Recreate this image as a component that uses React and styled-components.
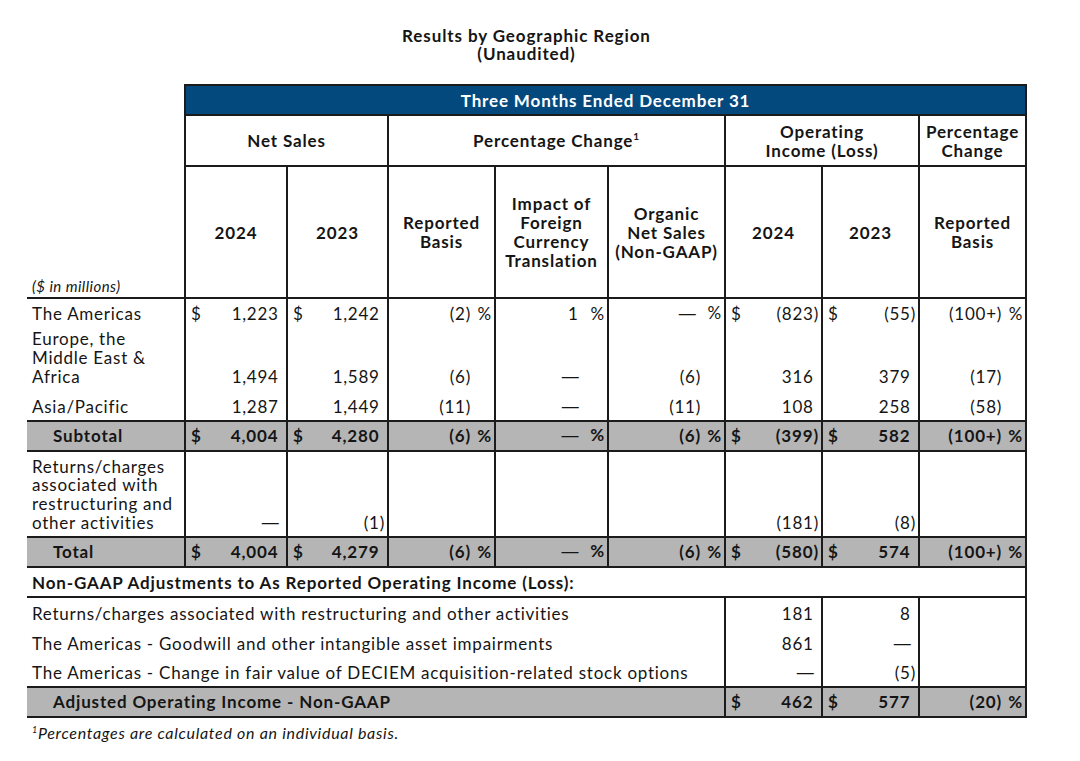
import React from 'react';
import styled, { createGlobalStyle, css } from 'styled-components';

const LINE = '#1b1b1b';
const BLUE = '#03497e';
const GRAY = '#b5b5b5';
const rule = `2px solid ${LINE}`;

const GlobalStyle = createGlobalStyle`
  html, body { margin: 0; padding: 0; background: #ffffff; }
  body {
    font-family: Lato, "Open Sans", "Liberation Sans", sans-serif;
    color: #151515;
  }
`;

const Page = styled.div`
  padding: 27px 0 0 27px;
  width: 999px;
`;

const Title = styled.h1`
  margin: 0 0 21px;
  font-size: 17px;
  line-height: 18px;
  font-weight: 700;
  letter-spacing: 0.9px;
  text-align: center;
`;

const Table = styled.table`
  width: 999px;
  table-layout: fixed;
  border-collapse: collapse;
  font-size: 17px;
  letter-spacing: 0.75px;
`;

const Col = styled.col`
  width: ${p => p.$w}px;
`;

const TR = styled.tr`
  height: ${p => p.$h}px;
  ${p => p.$total && css`
    background: ${GRAY};
    font-weight: 700;
    letter-spacing: 0.85px;
    & > td { border-top: ${rule}; border-bottom: ${rule}; vertical-align: middle; padding-bottom: 0; }
  `}
`;

const Blank = styled.th`
  padding: 0;
  border: none;
  text-align: left;
  vertical-align: bottom;
  ${p => p.$rule && css`border-bottom: ${rule};`}
`;

const UnitNote = styled.span`
  display: block;
  padding: 0 0 3px 5px;
  font-style: italic;
  font-weight: 400;
  font-size: 15px;
  line-height: 16px;
  letter-spacing: 0.45px;
`;

const Banner = styled.th`
  background: ${BLUE};
  color: #ffffff;
  border: ${rule};
  padding: 0;
  font-size: 17px;
  font-weight: 700;
  letter-spacing: 0.85px;
  text-align: center;
  vertical-align: middle;
`;

const HeadCell = styled.th`
  border: ${rule};
  padding: 0 2px;
  font-size: 17px;
  font-weight: 700;
  letter-spacing: 0.85px;
  line-height: 19px;
  text-align: center;
  vertical-align: middle;
`;

const Sup = styled.sup`
  font-size: 10px;
  line-height: 0;
  vertical-align: 7px;
`;

const Label = styled.td`
  padding: 0 4px 3.5px ${p => (p.$indent ? 26 : 5)}px;
  line-height: 18.7px;
  text-align: left;
  vertical-align: bottom;
`;

const SectionHead = styled.td`
  padding: 0 4px 0 5px;
  border-right: ${rule};
  border-bottom: ${rule};
  font-weight: 700;
  letter-spacing: 0.85px;
  text-align: left;
  vertical-align: middle;
`;

const Cell = styled.td`
  border-left: ${rule};
  border-right: ${rule};
  padding: 0 2px 3.5px 5px;
  line-height: 18.7px;
  vertical-align: bottom;
`;

const Inner = styled.div`
  display: flex;
  align-items: baseline;
  white-space: nowrap;
`;

const Dollar = styled.span`
  flex: none;
`;

const Figure = styled.span`
  flex: 1;
  text-align: right;
`;

const Dash = styled.span`
  font-family: "Liberation Sans", Arial, sans-serif;
  font-weight: 400;
  letter-spacing: 0;
`;

const Hang = styled.span`
  visibility: hidden;
`;

const Suffix = styled.span`
  flex: none;
  width: 21px;
  text-align: right;
`;

const Footnote = styled.p`
  margin: 6px 0 0 5px;
  font-size: 16px;
  font-style: italic;
  letter-spacing: 0.7px;
  line-height: 18px;
`;

const FootSup = styled.sup`
  font-size: 9px;
  line-height: 0;
  vertical-align: 6px;
`;

const WIDTHS = [158, 102, 101, 107, 113, 117, 97, 97, 107];

const a = (v, dollar = false) => ({ kind: 'amt', v, dollar });
const p = (v, pct = false) => ({ kind: 'pct', v, pct });
const e = () => ({ kind: 'empty' });

const ROWS = [
  {
    label: ['The Americas'], h: 29,
    cells: [a('1,223', true), a('1,242', true), p('(2)', true), p('1', true), p('—', true), a('(823)', true), a('(55)', true), p('(100+)', true)],
  },
  {
    label: ['Europe, the', 'Middle East &', 'Africa'], h: 63,
    cells: [a('1,494'), a('1,589'), p('(6)'), p('—'), p('(6)'), a('316'), a('379'), p('(17)')],
  },
  {
    label: ['Asia/Pacific'], h: 31,
    cells: [a('1,287'), a('1,449'), p('(11)'), p('—'), p('(11)'), a('108'), a('258'), p('(58)')],
  },
  {
    label: ['Subtotal'], h: 30, total: true,
    cells: [a('4,004', true), a('4,280', true), p('(6)', true), p('—', true), p('(6)', true), a('(399)', true), a('582', true), p('(100+)', true)],
  },
  {
    label: ['Returns/charges', 'associated with', 'restructuring and', 'other activities'], h: 86,
    cells: [a('—'), a('(1)'), e(), e(), e(), a('(181)'), a('(8)'), e()],
  },
  {
    label: ['Total'], h: 30, total: true,
    cells: [a('4,004', true), a('4,279', true), p('(6)', true), p('—', true), p('(6)', true), a('(580)', true), a('574', true), p('(100+)', true)],
  },
];

const ADJ_ROWS = [
  { label: 'Returns/charges associated with restructuring and other activities', cells: [a('181'), a('8'), e()] },
  { label: 'The Americas - Goodwill and other intangible asset impairments', cells: [a('861'), a('—'), e()] },
  { label: 'The Americas - Change in fair value of DECIEM acquisition-related stock options', cells: [a('—'), a('(5)'), e()] },
];

const ADJ_TOTAL = [a('462', true), a('577', true), p('(20)', true)];

function Value({ cell }) {
  if (cell.kind === 'empty') return null;
  const hang = !cell.v.endsWith(')');
  return (
    <Inner>
      {cell.kind === 'amt' && <Dollar>{cell.dollar ? '$' : ''}</Dollar>}
      <Figure>
        {cell.v === '—' ? <Dash>—</Dash> : cell.v}
        {hang && <Hang>)</Hang>}
      </Figure>
      {cell.kind === 'pct' && <Suffix>{cell.pct ? '%' : ''}</Suffix>}
    </Inner>
  );
}

function Lines({ parts }) {
  return parts.map((t, i) => (
    <React.Fragment key={i}>
      {i > 0 && <br />}
      {t}
    </React.Fragment>
  ));
}

export default function App() {
  return (
    <Page>
      <GlobalStyle />
      <Title>
        Results by Geographic Region
        <br />
        (Unaudited)
      </Title>
      <Table>
        <colgroup>
          {WIDTHS.map((w, i) => <Col key={i} $w={w} />)}
        </colgroup>
        <thead>
          <TR $h={30}>
            <Blank />
            <Banner colSpan={8}>Three Months Ended December 31</Banner>
          </TR>
          <TR $h={51}>
            <Blank />
            <HeadCell colSpan={2}>Net Sales</HeadCell>
            <HeadCell colSpan={3}>Percentage Change<Sup>1</Sup></HeadCell>
            <HeadCell colSpan={2}>Operating<br />Income (Loss)</HeadCell>
            <HeadCell>Percentage<br />Change</HeadCell>
          </TR>
          <TR $h={132}>
            <Blank $rule><UnitNote>($ in millions)</UnitNote></Blank>
            <HeadCell>2024</HeadCell>
            <HeadCell>2023</HeadCell>
            <HeadCell>Reported<br />Basis</HeadCell>
            <HeadCell>Impact of<br />Foreign<br />Currency<br />Translation</HeadCell>
            <HeadCell>Organic<br />Net Sales<br />(Non-GAAP)</HeadCell>
            <HeadCell>2024</HeadCell>
            <HeadCell>2023</HeadCell>
            <HeadCell>Reported<br />Basis</HeadCell>
          </TR>
        </thead>
        <tbody>
          {ROWS.map((row, i) => (
            <TR key={i} $h={row.h} $total={row.total}>
              <Label $indent={row.total}><Lines parts={row.label} /></Label>
              {row.cells.map((c, j) => (
                <Cell key={j}><Value cell={c} /></Cell>
              ))}
            </TR>
          ))}
          <TR $h={30}>
            <SectionHead colSpan={9}>Non-GAAP Adjustments to As Reported Operating Income (Loss):</SectionHead>
          </TR>
          {ADJ_ROWS.map((row, i) => (
            <TR key={i} $h={30}>
              <Label colSpan={6}>{row.label}</Label>
              {row.cells.map((c, j) => (
                <Cell key={j}><Value cell={c} /></Cell>
              ))}
            </TR>
          ))}
          <TR $h={30} $total>
            <Label colSpan={6} $indent>Adjusted Operating Income - Non-GAAP</Label>
            {ADJ_TOTAL.map((c, j) => (
              <Cell key={j}><Value cell={c} /></Cell>
            ))}
          </TR>
        </tbody>
      </Table>
      <Footnote><FootSup>1</FootSup>Percentages are calculated on an individual basis.</Footnote>
    </Page>
  );
}
